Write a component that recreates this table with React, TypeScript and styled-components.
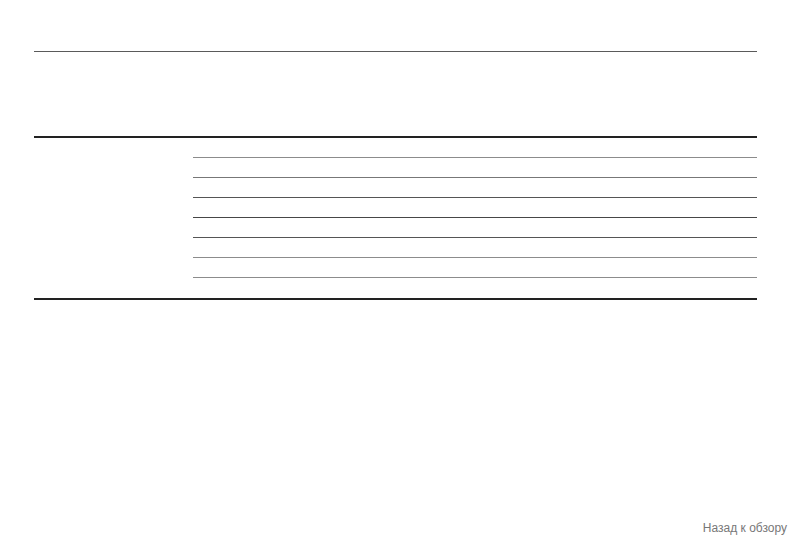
import React from 'react';
import styled, { createGlobalStyle } from 'styled-components';

const GlobalStyle = createGlobalStyle`
  html, body {
    margin: 0;
    padding: 0;
    background: #ffffff;
  }
  body {
    font-family: "Liberation Sans", Arial, sans-serif;
    color: #222222;
  }
`;

const Page = styled.div`
  min-height: 540px;
  display: flex;
  flex-direction: column;
  box-sizing: border-box;
`;

const Content = styled.main`
  width: 723px;
  margin-left: 34px;
  padding-top: 51px;
`;

const Rule = styled.hr`
  margin: 0;
  border: 0;
  height: 1px;
  background: #5a5a5a;
`;

const HeadingSpace = styled.div`
  height: 84px;
`;

const Table = styled.div`
  display: flex;
  border-top: 2px solid #222222;
  border-bottom: 2px solid #222222;
`;

const GroupCell = styled.div`
  width: 159px;
  flex-shrink: 0;
`;

const Rows = styled.div`
  flex: 1;
  display: flex;
  flex-direction: column;
`;

const Row = styled.div<{ $line: string; $last?: boolean }>`
  display: grid;
  grid-template-columns: 313px 1fr;
  height: 20px;
  box-sizing: border-box;
  border-bottom: ${({ $last, $line }) => ($last ? 'none' : `1px solid ${$line}`)};
`;

const Cell = styled.div`
  font-size: 12px;
  line-height: 19px;
`;

const Footer = styled.footer`
  margin-top: auto;
  display: flex;
  justify-content: flex-end;
  padding: 0 21px 5px 0;
`;

const BackLink = styled.a`
  font-size: 12px;
  line-height: 14px;
  color: #777777;
  text-decoration: none;
  cursor: pointer;
`;

const lineColors = ['#8c8c8c', '#777777', '#555555', '#464646', '#555555', '#8c8c8c', '#8c8c8c', ''];

export default function App() {
  return (
    <Page>
      <GlobalStyle />
      <Content>
        <Rule />
        <HeadingSpace />
        <Table>
          <GroupCell />
          <Rows>
            {lineColors.map((c, i) => (
              <Row key={i} $line={c} $last={i === lineColors.length - 1}>
                <Cell />
                <Cell />
              </Row>
            ))}
          </Rows>
        </Table>
      </Content>
      <Footer>
        <BackLink>Назад к обзору</BackLink>
      </Footer>
    </Page>
  );
}
